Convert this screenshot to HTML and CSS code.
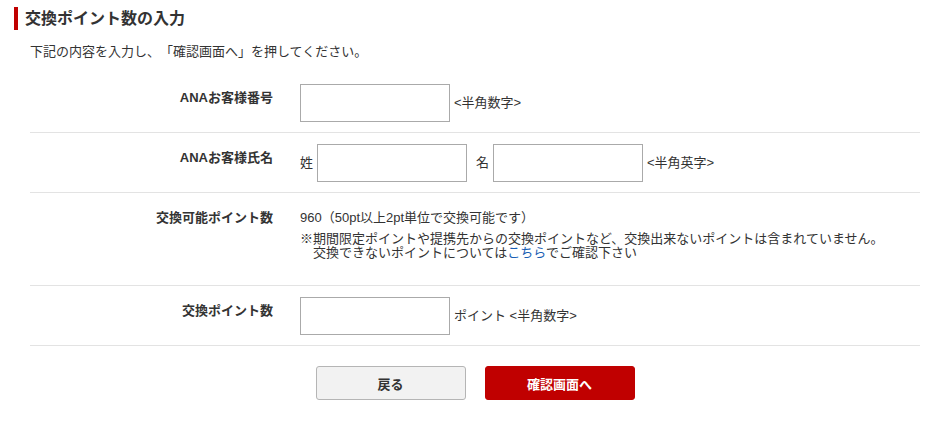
FILE: index.html
```html
<!DOCTYPE html>
<html lang="ja">
<head>
<meta charset="utf-8">
<title>交換ポイント数の入力</title>
<link rel="stylesheet" href="styles.css">
</head>
<body>
<div class="page">
  <h2 class="heading">交換ポイント数の入力</h2>
  <p class="intro">下記の内容を入力し、「確認画面へ」を押してください。</p>
  <table class="form">
    <tr>
      <th>ANAお客様番号</th>
      <td><input type="text" class="field"><span class="hint">&lt;半角数字&gt;</span></td>
    </tr>
    <tr>
      <th>ANAお客様氏名</th>
      <td><span class="pre">姓</span><input type="text" class="field"><span class="pre pre-2">名</span><input type="text" class="field"><span class="hint">&lt;半角英字&gt;</span></td>
    </tr>
    <tr class="info-row">
      <th>交換可能ポイント数</th>
      <td>
        <div class="points">960（50pt以上2pt単位で交換可能です）</div>
        <p class="note">※期間限定ポイントや提携先からの交換ポイントなど、交換出来ないポイントは含まれていません。<br>交換できないポイントについては<a href="#" class="link">こちら</a>でご確認下さい</p>
      </td>
    </tr>
    <tr>
      <th>交換ポイント数</th>
      <td><input type="text" class="field"><span class="hint">ポイント &lt;半角数字&gt;</span></td>
    </tr>
  </table>
  <div class="actions">
    <button class="btn btn-back">戻る</button>
    <button class="btn btn-next">確認画面へ</button>
  </div>
</div>
</body>
</html>
```

FILE: styles.css
```css
html, body {
  margin: 0;
  padding: 0;
  background: #fff;
}
body {
  font-family: "Liberation Sans", "Noto Sans CJK JP", sans-serif;
  color: #333;
  font-size: 13px;
  text-spacing-trim: space-all;
}
.page {
  padding-top: 7px;
}
.heading {
  margin: 0 0 0 14px;
  border-left: 4px solid #c00000;
  padding-left: 7px;
  font-size: 16px;
  font-weight: bold;
  line-height: 23px;
  color: #333;
}
.intro {
  margin: 13px 0 0 30px;
  font-size: 13px;
  line-height: 18px;
}
.form {
  margin: 12px 0 0 30px;
  width: 890px;
  border-collapse: collapse;
}
.form th,
.form td {
  border-bottom: 1px solid #e3e3e3;
  vertical-align: top;
  font-size: 13px;
  line-height: 18px;
}
.form th {
  width: 243px;
  padding: 16px 27px 0 0;
  text-align: right;
  font-weight: bold;
}
.form td {
  padding: 11px 0 10px 0;
  text-align: left;
}
.form td > * {
  vertical-align: middle;
}
.field {
  box-sizing: border-box;
  width: 150px;
  height: 38px;
  border: 1px solid #aaa;
  margin: 0;
  padding: 0 6px;
  font-size: 13px;
  vertical-align: middle;
}
.hint {
  margin-left: 4px;
}
.pre {
  margin-right: 4px;
}
.pre-2 {
  margin-left: 9px;
}
.info-row td {
  padding-top: 16px;
  padding-bottom: 25px;
}
.points {
  line-height: 18px;
}
.note {
  margin: 5px 0 0 0;
  line-height: 14px;
  padding-left: 13px;
  text-indent: -13px;
}
.link {
  color: #1a5fb4;
  text-decoration: none;
}
.actions {
  margin: 20px 0 0 30px;
  width: 890px;
  display: flex;
  justify-content: center;
  gap: 19px;
}
.btn {
  box-sizing: border-box;
  width: 150px;
  height: 34px;
  border-radius: 3px;
  font-family: "Liberation Sans", "Noto Sans CJK JP", sans-serif;
  font-size: 13px;
  font-weight: bold;
  cursor: pointer;
}
.btn-back {
  background: #f2f2f2;
  border: 1px solid #b5b5b5;
  color: #333;
}
.btn-next {
  background: #c00000;
  border: 1px solid #c00000;
  color: #fff;
}
```
